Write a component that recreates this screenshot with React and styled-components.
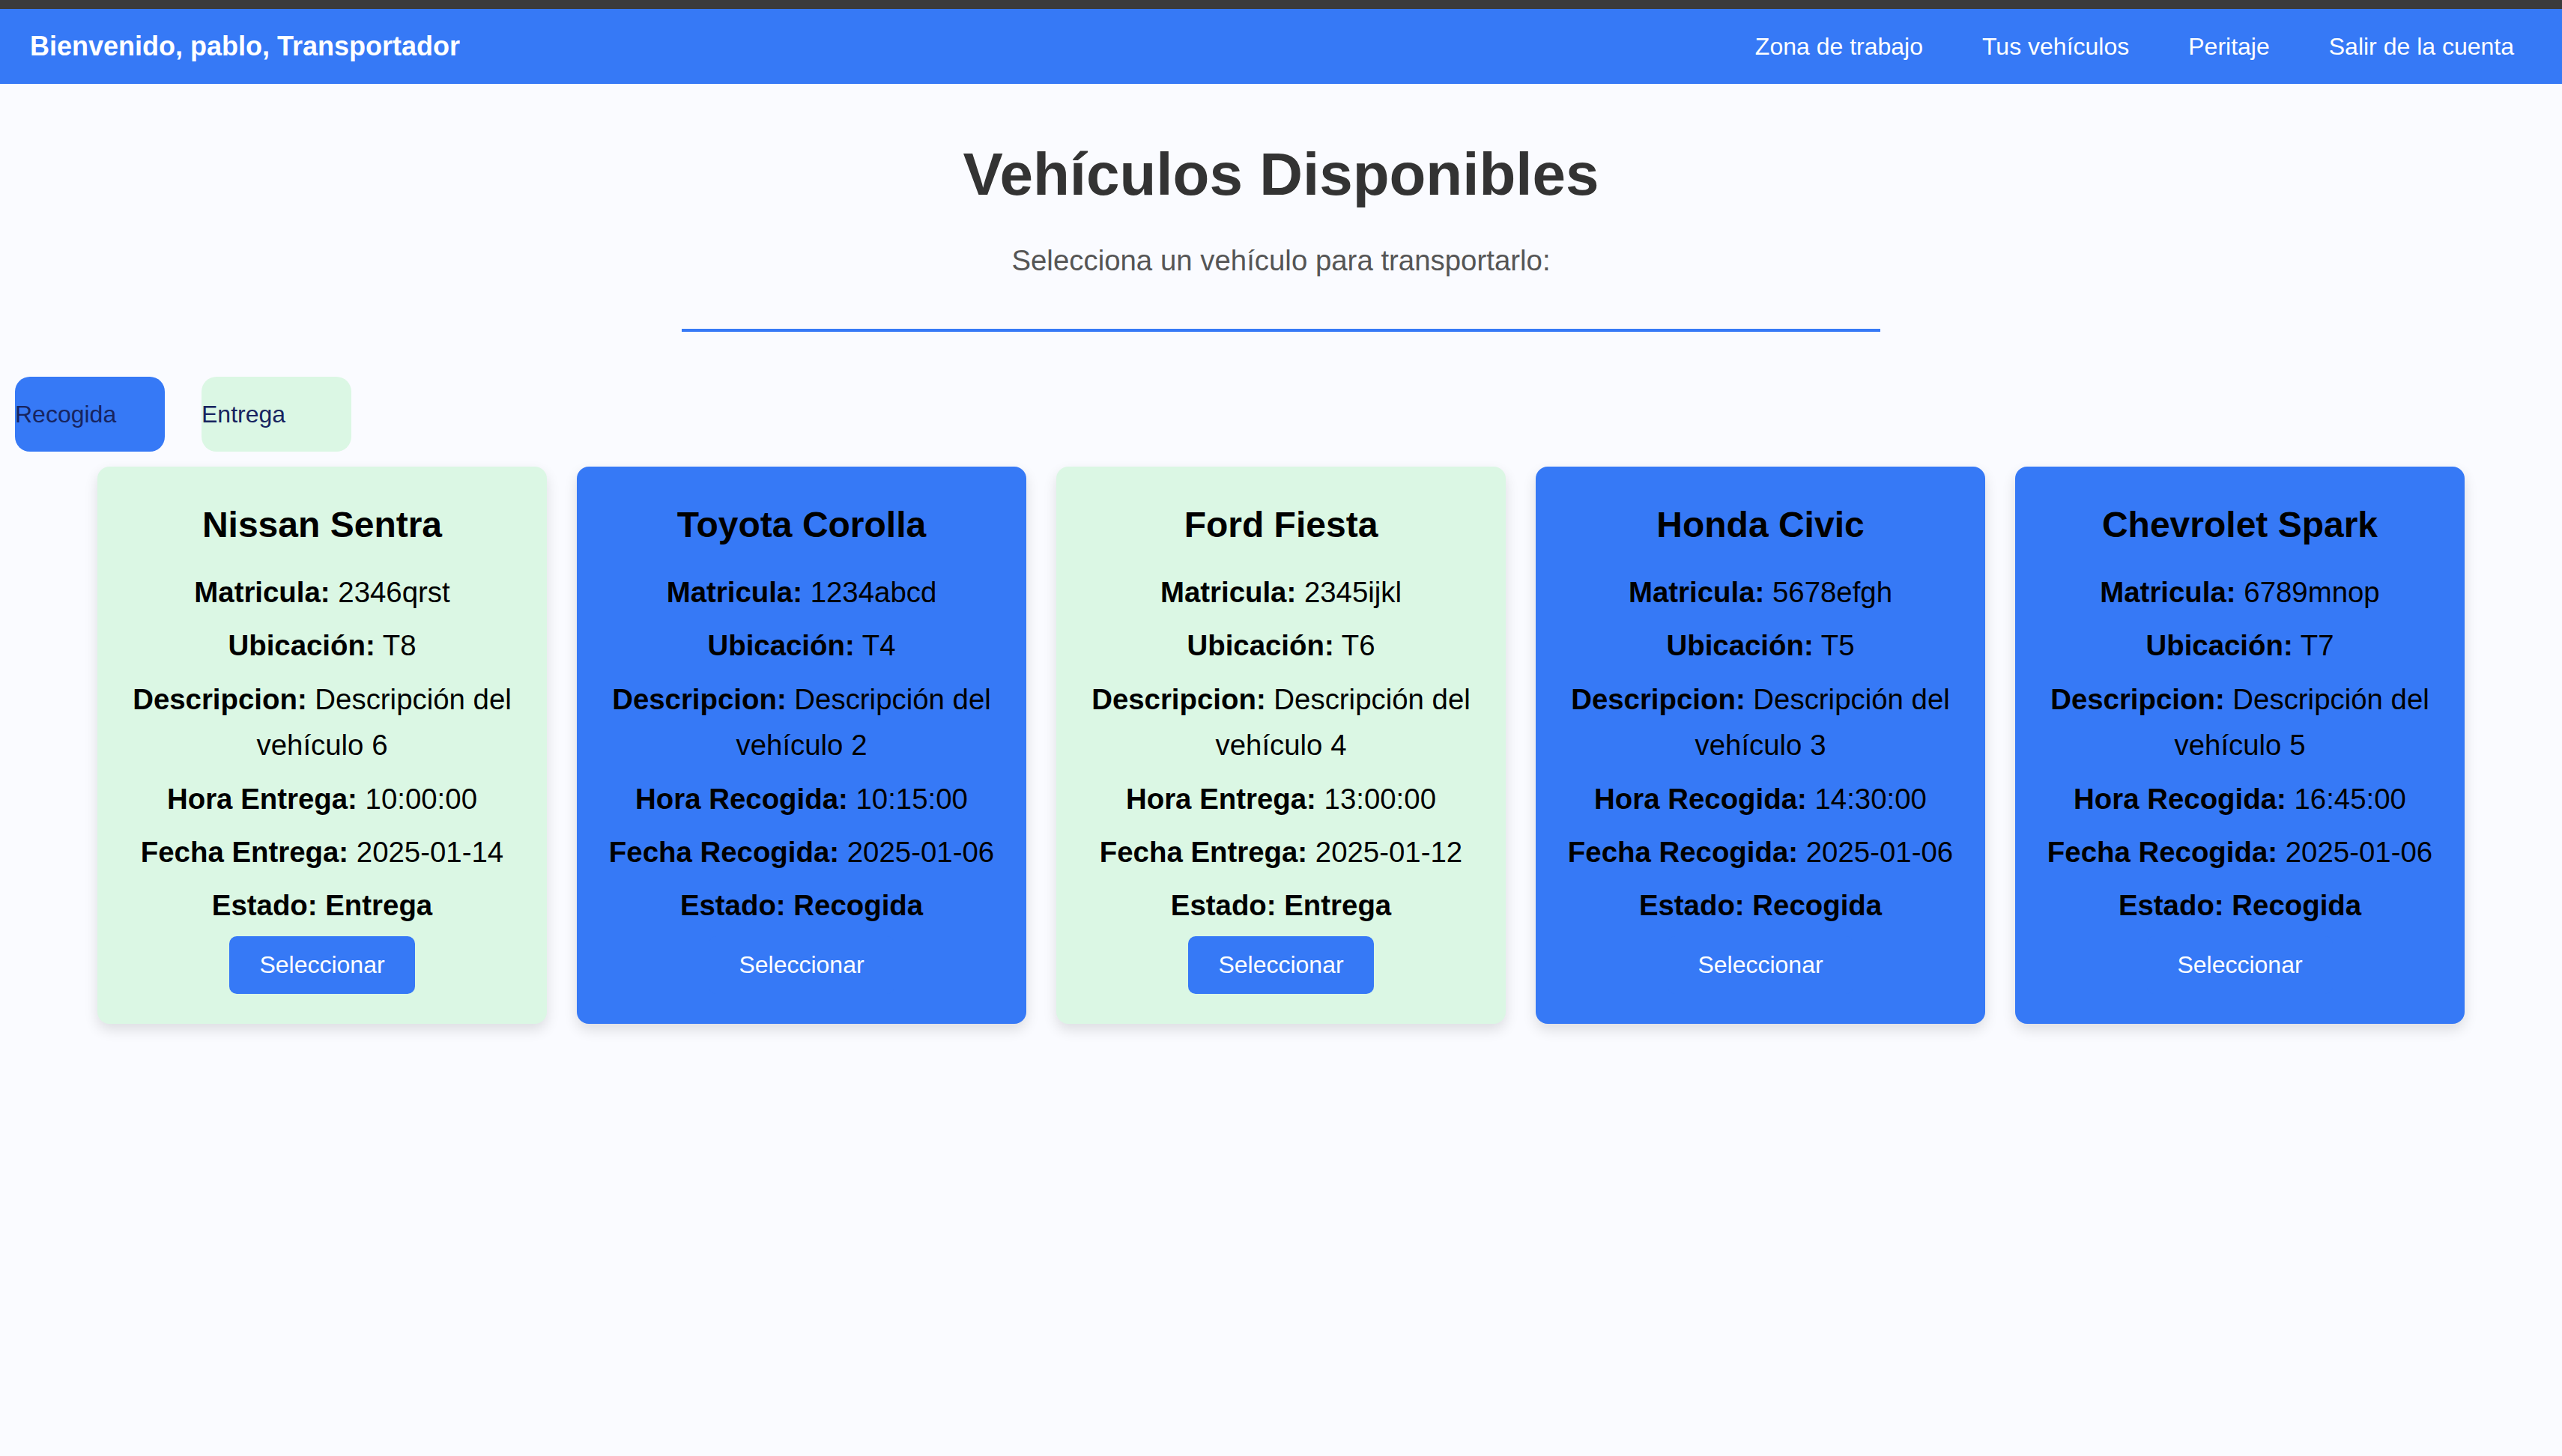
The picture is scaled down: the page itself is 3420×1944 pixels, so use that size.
import React from "react";
import styled, { createGlobalStyle } from "styled-components";

const Global = createGlobalStyle`
  html, body {
    margin: 0;
    padding: 0;
    background: #fafbff;
    font-family: "Liberation Sans", Arial, Helvetica, sans-serif;
  }
  * { box-sizing: border-box; }
`;

const BLUE = "#3679f6";
const GREEN = "#dbf7e4";

const Page = styled.div`
  min-height: 1944px;
  background: #fafbff;
  border-top: 12px solid #3b3b3b;
`;

const NavBar = styled.nav`
  height: 100px;
  background: ${BLUE};
  display: flex;
  align-items: center;
  justify-content: space-between;
  padding: 0 64px 0 40px;
  color: #fff;
`;

const Brand = styled.div`
  font-size: 36px;
  font-weight: 700;
`;

const NavLinks = styled.div`
  display: flex;
  gap: 79px;
`;

const NavLink = styled.a`
  font-size: 32px;
  color: #fff;
  text-decoration: none;
  cursor: pointer;
`;

const Main = styled.main`
  display: flex;
  flex-direction: column;
  align-items: center;
`;

const Title = styled.h1`
  margin: 75px 0 0;
  font-size: 80px;
  font-weight: 700;
  color: #333;
  line-height: normal;
`;

const Subtitle = styled.p`
  margin: 47px 0 0;
  font-size: 38.4px;
  color: #555;
  line-height: normal;
`;

const Divider = styled.hr`
  width: 1600px;
  height: 4px;
  margin: 69px 0 0;
  border: none;
  background: ${BLUE};
`;

const FilterRow = styled.div`
  align-self: stretch;
  display: flex;
  gap: 49px;
  padding-left: 20px;
  margin-top: 60px;
`;

const FilterButton = styled.button`
  width: 200px;
  height: 100px;
  padding: 0;
  border: none;
  border-radius: 20px;
  background: ${(p) => (p.$tone === "blue" ? BLUE : GREEN)};
  color: #17245f;
  font-family: "Liberation Sans", Arial, sans-serif;
  font-size: 32px;
  text-align: left;
  cursor: pointer;
`;

const CardGrid = styled.div`
  display: flex;
  justify-content: center;
  gap: 40px;
  margin-top: 20px;
`;

const Card = styled.div`
  width: 600px;
  padding: 20px;
  border-radius: 16px;
  background: ${(p) => (p.$tone === "blue" ? BLUE : GREEN)};
  box-shadow: 0 8px 18px rgba(0, 0, 0, 0.12);
  text-align: center;
  color: #000;
  line-height: 1.6;
`;

const CardTitle = styled.h3`
  margin: 20px 0;
  font-size: 48px;
  font-weight: 700;
`;

const Field = styled.p`
  margin: 10px 0;
  font-size: 38.4px;
  font-weight: ${(p) => (p.$bold ? 700 : 400)};
`;

const SelectButton = styled.button`
  display: block;
  margin: 10px auto 20px;
  padding: 20px 40px;
  border: none;
  border-radius: 10px;
  background: ${BLUE};
  color: #fff;
  font-family: "Liberation Sans", Arial, sans-serif;
  font-size: 32px;
  line-height: normal;
  cursor: pointer;
`;

const vehicles = [
  { name: "Nissan Sentra", mat: "2346qrst", ubi: "T8", n: 6, kind: "Entrega", hora: "10:00:00", fecha: "2025-01-14" },
  { name: "Toyota Corolla", mat: "1234abcd", ubi: "T4", n: 2, kind: "Recogida", hora: "10:15:00", fecha: "2025-01-06" },
  { name: "Ford Fiesta", mat: "2345ijkl", ubi: "T6", n: 4, kind: "Entrega", hora: "13:00:00", fecha: "2025-01-12" },
  { name: "Honda Civic", mat: "5678efgh", ubi: "T5", n: 3, kind: "Recogida", hora: "14:30:00", fecha: "2025-01-06" },
  { name: "Chevrolet Spark", mat: "6789mnop", ubi: "T7", n: 5, kind: "Recogida", hora: "16:45:00", fecha: "2025-01-06" },
];

export default function App() {
  return (
    <>
      <Global />
      <Page>
        <NavBar>
          <Brand>Bienvenido, pablo, Transportador</Brand>
          <NavLinks>
            <NavLink>Zona de trabajo</NavLink>
            <NavLink>Tus vehículos</NavLink>
            <NavLink>Peritaje</NavLink>
            <NavLink>Salir de la cuenta</NavLink>
          </NavLinks>
        </NavBar>
        <Main>
          <Title>Vehículos Disponibles</Title>
          <Subtitle>Selecciona un vehículo para transportarlo:</Subtitle>
          <Divider />
          <FilterRow>
            <FilterButton $tone="blue">Recogida</FilterButton>
            <FilterButton $tone="green">Entrega</FilterButton>
          </FilterRow>
          <CardGrid>
            {vehicles.map((v) => (
              <Card key={v.mat} $tone={v.kind === "Recogida" ? "blue" : "green"}>
                <CardTitle>{v.name}</CardTitle>
                <Field>
                  <strong>Matricula:</strong> {v.mat}
                </Field>
                <Field>
                  <strong>Ubicación:</strong> {v.ubi}
                </Field>
                <Field>
                  <strong>Descripcion:</strong> Descripción del vehículo {v.n}
                </Field>
                <Field>
                  <strong>Hora {v.kind}:</strong> {v.hora}
                </Field>
                <Field>
                  <strong>Fecha {v.kind}:</strong> {v.fecha}
                </Field>
                <Field $bold>Estado: {v.kind}</Field>
                <SelectButton>Seleccionar</SelectButton>
              </Card>
            ))}
          </CardGrid>
        </Main>
      </Page>
    </>
  );
}
